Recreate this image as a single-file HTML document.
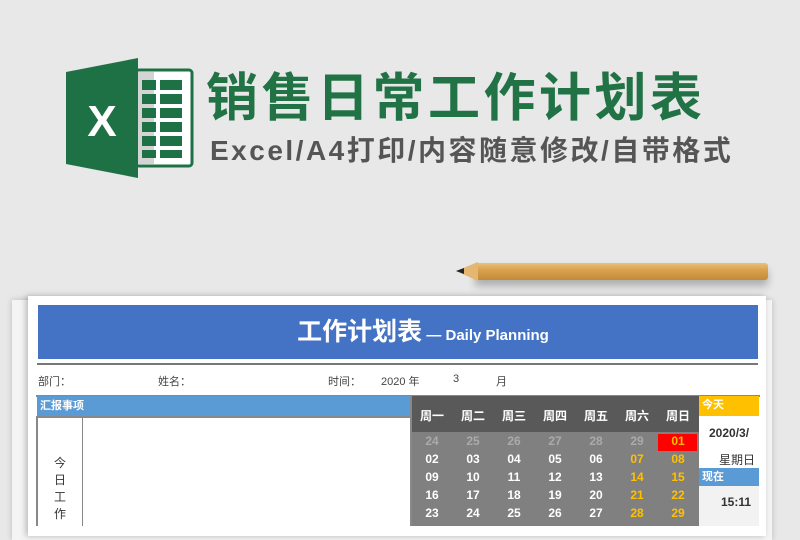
<!DOCTYPE html>
<html><head><meta charset="utf-8"><style>
*{margin:0;padding:0;box-sizing:border-box}
body{width:800px;height:526px;overflow:hidden;background:#e8e8e8;font-family:"Liberation Sans","Noto Sans CJK SC",sans-serif;position:relative}
.a{position:absolute}
.cal span{position:absolute;width:40px;text-align:center;font-weight:bold;font-size:12px;color:#fff}
</style></head><body>
<svg class="a" style="left:66px;top:58px" width="130" height="120" viewBox="0 0 130 120">
<rect x="70" y="12" width="56" height="96" rx="3" fill="#fff" stroke="#1e7145" stroke-width="3"/>
<rect x="70" y="14" width="18" height="92" fill="#aaa" opacity=".5"/>
<g fill="#1e7145">
<rect x="76" y="22" width="14" height="10"/><rect x="94" y="22" width="22" height="10"/>
<rect x="76" y="36" width="14" height="10"/><rect x="94" y="36" width="22" height="10"/>
<rect x="76" y="50" width="14" height="10"/><rect x="94" y="50" width="22" height="10"/>
<rect x="76" y="64" width="14" height="10"/><rect x="94" y="64" width="22" height="10"/>
<rect x="76" y="78" width="14" height="10"/><rect x="94" y="78" width="22" height="10"/>
<rect x="76" y="92" width="14" height="8"/><rect x="94" y="92" width="22" height="8"/>
</g>
<path d="M0 14 L72 0 L72 120 L0 106Z" fill="#1e7145"/>
<text x="36" y="78" fill="#fff" font-size="44" font-weight="bold" text-anchor="middle" font-family="Liberation Sans">X</text>
</svg>
<div class="a" style="left:206px;top:68px;font-size:52px;font-weight:bold;color:#217346;letter-spacing:3.5px;line-height:62px;white-space:nowrap">销售日常工作计划表</div>
<div class="a" style="left:210px;top:134px;font-size:28px;font-weight:bold;color:#555;line-height:34px;letter-spacing:2.5px;white-space:nowrap">Excel/A4打印/内容随意修改/自带格式</div>
<!-- pencil -->
<div class="a" style="left:475px;top:263px;width:293px;height:17px;background:linear-gradient(#e8c27a,#d9a24e 40%,#c48a3a);border-radius:0 3px 3px 0;box-shadow:0 6px 8px rgba(0,0,0,.25)"></div>
<svg class="a" style="left:456px;top:262px" width="22" height="19"><path d="M22 0 L0 9 L22 19Z" fill="#e3b672"/><path d="M8 6 L0 9 L8 12Z" fill="#222"/></svg>
<!-- papers -->
<div class="a" style="left:12px;top:300px;width:760px;height:240px;background:#f4f4f4;box-shadow:0 0 6px rgba(0,0,0,.2)"></div>
<div class="a" style="left:28px;top:296px;width:738px;height:240px;background:#fff;box-shadow:-2px 0 6px rgba(0,0,0,.25)"></div>
<div class="a" style="left:38px;top:305px;width:720px;height:54px;background:#4472c4;color:#fff;text-align:center;line-height:54px"><span style="font-size:25px;font-weight:bold;margin-left:50px">工作计划表</span><span style="font-size:15px;font-weight:bold"> — Daily Planning</span></div>
<div class="a" style="left:37px;top:363px;width:721px;height:2px;background:#777"></div>
<div class="a" style="left:38px;top:373px;font-size:11px;color:#444">部门：</div>
<div class="a" style="left:158px;top:373px;font-size:11px;color:#444">姓名：</div>
<div class="a" style="left:328px;top:373px;font-size:11px;color:#444">时间：</div>
<div class="a" style="left:381px;top:373px;font-size:11px;color:#444">2020 年</div>
<div class="a" style="left:453px;top:373px;font-size:11px;color:#444">3</div>
<div class="a" style="left:496px;top:373px;font-size:11px;color:#444">月</div>
<div class="a" style="left:36px;top:395px;width:724px;height:2px;background:#888"></div>
<div class="a" style="left:37px;top:396px;width:374px;height:20px;background:#5b9bd5;color:#fff;font-size:11px;font-weight:bold;line-height:20px;padding-left:3px">汇报事项</div>
<div class="a" style="left:37px;top:416px;width:374px;height:2px;background:#888"></div>
<div class="a" style="left:36px;top:416px;width:2px;height:110px;background:#888"></div>
<div class="a" style="left:82px;top:416px;width:1px;height:110px;background:#888"></div>
<div class="a" style="left:410px;top:396px;width:2px;height:130px;background:#888"></div>
<div class="a" style="left:53px;top:455px;width:14px;font-size:12px;color:#333;line-height:17px;text-align:center">今日工作</div>
<div class="a" style="left:412px;top:396px;width:287px;height:36px;background:#595959"></div>
<div class="a" style="left:412px;top:432px;width:287px;height:94px;background:#808080"></div>
<div class="a cal" style="left:412px;top:396px;width:287px;height:130px">
<div class="a" style="left:246px;top:38px;width:39px;height:17px;background:#f00"></div>
</div>
<div class="a" style="left:699px;top:396px;width:60px;height:20px;background:#ffc000;color:#fff;font-size:11px;font-weight:bold;line-height:18px;padding-left:3px">今天</div>
<div class="a" style="left:699px;top:416px;width:60px;height:52px;background:#fff"></div>
<div class="a" style="left:709px;top:426px;font-size:12px;font-weight:bold;color:#333">2020/3/</div>
<div class="a" style="left:719px;top:451px;font-size:12px;color:#333">星期日</div>
<div class="a" style="left:699px;top:468px;width:60px;height:18px;background:#5b9bd5;color:#fff;font-size:11px;font-weight:bold;line-height:18px;padding-left:3px">现在</div>
<div class="a" style="left:699px;top:486px;width:60px;height:40px;background:#f2f2f2"></div>
<div class="a" style="left:721px;top:495px;font-size:12px;font-weight:bold;color:#333">15:11</div>
<div class="a cal" style="left:412px;top:396px">
<span style="left:0;top:11px">周一</span><span style="left:41px;top:11px">周二</span><span style="left:82px;top:11px">周三</span><span style="left:123px;top:11px">周四</span><span style="left:164px;top:11px">周五</span><span style="left:205px;top:11px">周六</span><span style="left:246px;top:11px">周日</span>
<span style="left:0;top:38px;color:#aaa">24</span><span style="left:41px;top:38px;color:#aaa">25</span><span style="left:82px;top:38px;color:#aaa">26</span><span style="left:123px;top:38px;color:#aaa">27</span><span style="left:164px;top:38px;color:#aaa">28</span><span style="left:205px;top:38px;color:#aaa">29</span><span style="left:246px;top:38px;color:#ffc000">01</span>
<span style="left:0;top:56px">02</span><span style="left:41px;top:56px">03</span><span style="left:82px;top:56px">04</span><span style="left:123px;top:56px">05</span><span style="left:164px;top:56px">06</span><span style="left:205px;top:56px;color:#ffc000">07</span><span style="left:246px;top:56px;color:#ffc000">08</span>
<span style="left:0;top:74px">09</span><span style="left:41px;top:74px">10</span><span style="left:82px;top:74px">11</span><span style="left:123px;top:74px">12</span><span style="left:164px;top:74px">13</span><span style="left:205px;top:74px;color:#ffc000">14</span><span style="left:246px;top:74px;color:#ffc000">15</span>
<span style="left:0;top:92px">16</span><span style="left:41px;top:92px">17</span><span style="left:82px;top:92px">18</span><span style="left:123px;top:92px">19</span><span style="left:164px;top:92px">20</span><span style="left:205px;top:92px;color:#ffc000">21</span><span style="left:246px;top:92px;color:#ffc000">22</span>
<span style="left:0;top:110px">23</span><span style="left:41px;top:110px">24</span><span style="left:82px;top:110px">25</span><span style="left:123px;top:110px">26</span><span style="left:164px;top:110px">27</span><span style="left:205px;top:110px;color:#ffc000">28</span><span style="left:246px;top:110px;color:#ffc000">29</span>
</div>
</body></html>
